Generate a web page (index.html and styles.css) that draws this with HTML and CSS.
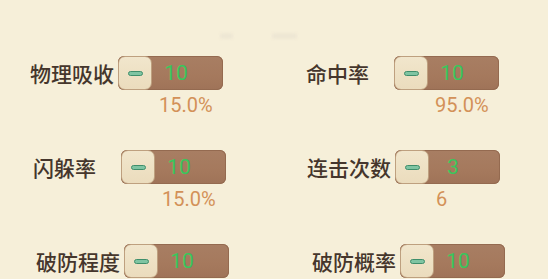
FILE: index.html
```html
<!DOCTYPE html>
<html lang="zh">
<head>
<meta charset="utf-8">
<link rel="stylesheet" href="styles.css">
</head>
<body>
<div class="page">
  <div class="hint"><span class="smudge s1"></span><span class="smudge s2"></span></div>
  <div class="grid">
    <div class="cell">
      <div class="line"><span class="label">物理吸收</span><div class="slider"><span class="btn"><i class="minus"></i></span><span class="val">10</span></div></div>
      <div class="sub">15.0%</div>
    </div>
    <div class="cell">
      <div class="line"><span class="label">命中率</span><div class="slider"><span class="btn"><i class="minus"></i></span><span class="val">10</span></div></div>
      <div class="sub">95.0%</div>
    </div>
    <div class="cell shift-a">
      <div class="line"><span class="label">闪躲率</span><div class="slider"><span class="btn"><i class="minus"></i></span><span class="val">10</span></div></div>
      <div class="sub">15.0%</div>
    </div>
    <div class="cell shift-b">
      <div class="line"><span class="label">连击次数</span><div class="slider"><span class="btn"><i class="minus"></i></span><span class="val">3</span></div></div>
      <div class="sub">6</div>
    </div>
    <div class="cell shift-c">
      <div class="line"><span class="label">破防程度</span><div class="slider"><span class="btn"><i class="minus"></i></span><span class="val">10</span></div></div>
    </div>
    <div class="cell shift-c">
      <div class="line"><span class="label">破防概率</span><div class="slider"><span class="btn"><i class="minus"></i></span><span class="val">10</span></div></div>
    </div>
  </div>
</div>
</body>
</html>
```
FILE: styles.css
```css
html, body {
  margin: 0;
  padding: 0;
  background: #f6efd9;
  overflow: hidden;
}
.page {
  padding: 31px 0 0 30px;
  font-family: Roboto, "Noto Sans CJK SC", sans-serif;
}
.hint {
  height: 9px;
  display: flex;
  gap: 39px;
  margin-left: 190px;
  margin-bottom: 16px;
}
.smudge {
  height: 6px;
  margin-top: 2px;
  border-radius: 3px;
  background: #eee7d4;
  filter: blur(1px);
}
.s1 { width: 13px; }
.s2 { width: 25px; }
.grid {
  display: grid;
  grid-template-columns: 276px 240px;
  grid-template-rows: 94px 94px 34px;
}
.cell {
  display: flex;
  flex-direction: column;
}
.shift-a { padding-left: 3px; }
.shift-b { padding-left: 1px; }
.shift-c { padding-left: 6px; }
.line {
  display: flex;
  align-items: center;
  height: 34px;
}
.label {
  width: 88px;
  flex: none;
  font-family: "Noto Sans CJK SC", sans-serif;
  font-size: 21px;
  font-weight: 500;
  line-height: 34px;
  color: #45362c;
  white-space: nowrap;
}
.slider {
  width: 105px;
  height: 34px;
  flex: none;
  display: flex;
  align-items: center;
  box-sizing: border-box;
  border-radius: 6px;
  background: linear-gradient(180deg, #a87e63 0%, #a5795d 60%, #9f7358 100%);
  box-shadow: inset 0 0 0 1px #946a50;
}
.btn {
  width: 34px;
  height: 34px;
  flex: none;
  box-sizing: border-box;
  border: 1.5px solid #bea07f;
  border-radius: 7px;
  background: linear-gradient(180deg, #f1e6cc 0%, #ebdcbd 100%);
  display: flex;
  align-items: center;
  justify-content: center;
}
.minus {
  display: block;
  width: 15px;
  height: 5px;
  box-sizing: border-box;
  border-radius: 3px;
  background: #7fc4a2;
  border: 1px solid #3f8e6b;
}
.val {
  width: 48px;
  text-align: center;
  font-family: Roboto, sans-serif;
  font-size: 21px;
  color: #3ac65c;
  line-height: 34px;
}
.sub {
  margin-left: 129px;
  margin-top: 4px;
  font-family: Roboto, sans-serif;
  font-size: 20px;
  line-height: 22px;
  color: #d39158;
}
```
